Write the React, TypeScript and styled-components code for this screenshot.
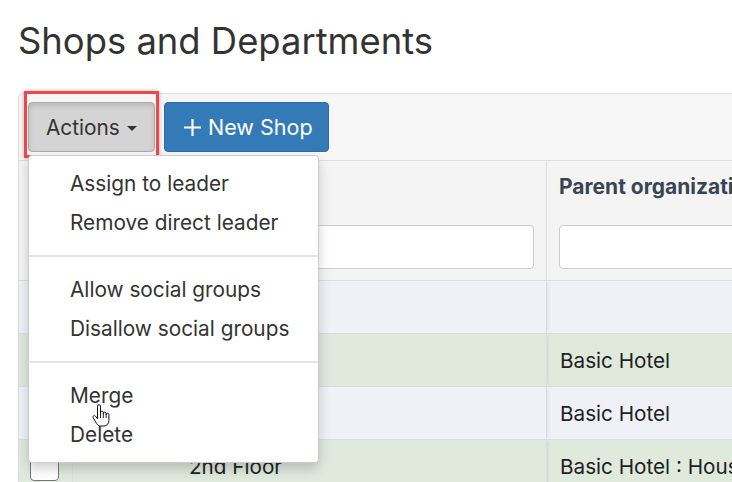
import React from 'react';
import styled, { createGlobalStyle } from 'styled-components';

const GlobalStyle = createGlobalStyle`
  html, body {
    margin: 0;
    padding: 0;
    background: #fff;
    overflow: hidden;
  }
  body {
    font-family: Inter, "Noto Sans", sans-serif;
    color: #333;
  }
`;

interface Row {
  name: string;
  indent: number;
  parent: string;
  tone: 'plain' | 'green';
}

const rows: Row[] = [
  { name: 'Basic Hotel', indent: 0, parent: '', tone: 'plain' },
  { name: 'Housekeeping', indent: 1, parent: 'Basic Hotel', tone: 'green' },
  { name: 'Reception', indent: 1, parent: 'Basic Hotel', tone: 'plain' },
  { name: '2nd Floor', indent: 2, parent: 'Basic Hotel : Housekeeping', tone: 'green' },
];

const menuGroups = [
  ['Assign to leader', 'Remove direct leader'],
  ['Allow social groups', 'Disallow social groups'],
  ['Merge', 'Delete'],
];

const PlusIcon = () => (
  <svg width="19" height="19" viewBox="0 0 19 19">
    <path d="M9.5 1v17M1 9.5h17" stroke="#fff" strokeWidth="2.2" fill="none" />
  </svg>
);

const HandCursor = () => (
  <svg width="18" height="23" viewBox="0 0 18 23">
    <path
      d="M5.5 2.2a1.5 1.5 0 0 1 3 0V10V8.6a1.4 1.4 0 0 1 2.8 0V10.5V9.6a1.4 1.4 0 0 1 2.8 0V11V10.6a1.4 1.4 0 0 1 2.8 0V16.5c0 3-2 5.5-5 5.5H8.7c-2 0-3.2-1-4.2-2.6L1.2 13.8a1.4 1.4 0 0 1 2.3-1.6L5.5 14.8Z"
      fill="#fff"
      stroke="#111"
      strokeWidth="1"
      strokeLinejoin="round"
    />
    <path d="M8.5 10v4M11.3 10.5v3.5M14.1 11v3" stroke="#111" strokeWidth="0.9" />
  </svg>
);

const App: React.FC = () => {
  return (
    <Page>
      <GlobalStyle />
      <Title>Shops and Departments</Title>
      <Panel>
        <Toolbar>
          <ActionsWrap>
            <ActionsButton>
              Actions <Caret />
            </ActionsButton>
            <Menu>
              {menuGroups.map((group, gi) => (
                <React.Fragment key={gi}>
                  {gi > 0 && <MenuDivider />}
                  {group.map((item) => (
                    <MenuItem key={item}>{item}</MenuItem>
                  ))}
                </React.Fragment>
              ))}
              <Cursor>
                <HandCursor />
              </Cursor>
            </Menu>
          </ActionsWrap>
          <PrimaryButton>
            <PlusIcon />
            New Shop
          </PrimaryButton>
        </Toolbar>
        <HeaderRow>
          <HeaderCell />
          <HeaderCell>
            <HeaderLabel>Name</HeaderLabel>
            <FilterInput />
          </HeaderCell>
          <HeaderCell>
            <HeaderLabel>Parent organization</HeaderLabel>
            <FilterInput />
          </HeaderCell>
        </HeaderRow>
        {rows.map((row) => (
          <BodyRow key={row.name} tone={row.tone}>
            <CheckCell>
              <Checkbox />
            </CheckCell>
            <NameCell indent={row.indent}>{row.name}</NameCell>
            <Cell>{row.parent}</Cell>
          </BodyRow>
        ))}
      </Panel>
    </Page>
  );
};

const Page = styled.div`
  position: relative;
  padding: 19px 0 0 18px;
  width: 1000px;
`;

const Title = styled.h1`
  margin: 0 0 30px 0;
  font-size: 36.4px;
  font-weight: 400;
  line-height: 44px;
  color: #333;
`;

const Panel = styled.div`
  border: 1px solid #ddd;
  border-radius: 4px;
  width: 960px;
`;

const Toolbar = styled.div`
  display: flex;
  gap: 9px;
  padding: 8px 9px;
  background: #f6f6f6;
  border-bottom: 1px solid #ddd;
  border-radius: 4px 4px 0 0;
`;

const ActionsWrap = styled.div`
  position: relative;

  &::after {
    content: '';
    position: absolute;
    top: -11px;
    bottom: -6px;
    left: -4px;
    right: -4px;
    border: 3px solid #f2444a;
    box-shadow: 0 0 4px rgba(0, 0, 0, 0.3);
    pointer-events: none;
  }
`;

const ActionsButton = styled.button`
  display: flex;
  align-items: center;
  gap: 7px;
  height: 50px;
  width: 127px;
  padding: 0 0 0 17px;
  background: #d4d4d4;
  border: 1px solid #a9a9a9;
  border-radius: 4px;
  box-shadow: inset 0 3px 5px rgba(0, 0, 0, 0.12);
  font-family: Inter, sans-serif;
  font-size: 20.8px;
  color: #333;
`;

const Caret = styled.span`
  display: inline-block;
  width: 0;
  height: 0;
  border-left: 5px solid transparent;
  border-right: 5px solid transparent;
  border-top: 5px solid #333;
  margin-top: 2px;
`;

const PrimaryButton = styled.button`
  display: flex;
  align-items: center;
  gap: 6px;
  height: 50px;
  width: 165px;
  padding: 0 0 0 18px;
  background: #337ab7;
  border: 1px solid #2e6da4;
  border-radius: 4px;
  font-family: Inter, sans-serif;
  font-size: 21.5px;
  color: #fff;
`;

const Menu = styled.div`
  position: absolute;
  top: 53px;
  left: 0;
  width: 289px;
  padding: 8px 0;
  background: #fff;
  border: 1px solid #ccc;
  border-radius: 4px;
  box-shadow: 0 6px 12px rgba(0, 0, 0, 0.18);
  z-index: 5;
`;

const MenuItem = styled.div`
  height: 39px;
  line-height: 39px;
  padding-left: 41px;
  font-size: 20.8px;
  color: #333;
`;

const MenuDivider = styled.div`
  height: 2px;
  margin: 13px 0 13px;
  background: #e5e5e5;
`;

const Cursor = styled.div`
  position: absolute;
  left: 63px;
  top: 248px;
  line-height: 0;
`;

const grid = `
  display: grid;
  grid-template-columns: 54px 474px 1fr;
`;

const HeaderRow = styled.div`
  ${grid};
  background: #f4f4f4;
  border-bottom: 1px solid #ddd;
`;

const HeaderCell = styled.div`
  display: flex;
  flex-direction: column;
  padding: 14px 12px 10px 12px;
  border-right: 1px solid #ddd;
  height: 95px;
`;

const HeaderLabel = styled.div`
  font-size: 21px;
  font-weight: 700;
  line-height: 24px;
  color: #3a4552;
  white-space: nowrap;
  margin-bottom: 26px;
`;

const FilterInput = styled.div`
  height: 42px;
  background: #fff;
  border: 1px solid #ccc;
  border-radius: 4px;
`;

const BodyRow = styled.div<{ tone: 'plain' | 'green' }>`
  ${grid};
  height: 52px;
  background: ${(p) => (p.tone === 'green' ? '#dfeadd' : '#f0f1f7')};
  border-bottom: 1px solid #ddd;
`;

const Cell = styled.div`
  display: flex;
  align-items: center;
  padding: 0 13px;
  font-size: 20.7px;
  color: #222;
  border-right: 1px solid #ddd;
  white-space: nowrap;
`;

const NameCell = styled(Cell)<{ indent: number }>`
  padding-left: ${(p) => 20 + p.indent * 48}px;
  box-shadow: 3px 0 3px -2px rgba(0, 0, 0, 0.08);
`;

const CheckCell = styled(Cell)`
  padding: 0 0 0 11px;
`;

const Checkbox = styled.div`
  width: 27px;
  height: 27px;
  background: #fff;
  border: 1px solid #777;
  border-radius: 4px;
`;

export default App;
